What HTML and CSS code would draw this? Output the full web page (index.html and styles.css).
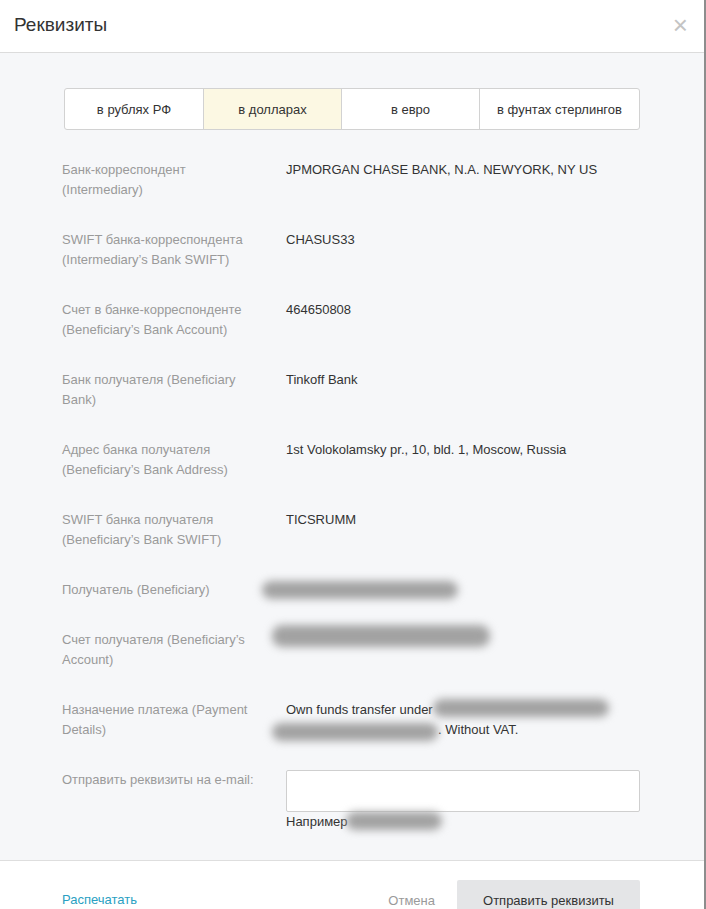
FILE: index.html
```html
<!DOCTYPE html>
<html lang="ru">
<head>
    <meta charset="UTF-8">
    <meta name="viewport" content="width=device-width, initial-scale=1.0">
    <title>Реквизиты</title>
    <link rel="stylesheet" href="styles.css">
</head>
<body>
    <div class="modal">
        <!-- Шапка -->
        <div class="modal-header">
            <h2>Реквизиты</h2>
            <span class="close">&times;</span>
        </div>

        <div class="modal-body">
            <div class="tabs">
                <div class="tab">в рублях РФ</div>
                <div class="tab active">в долларах</div>
                <div class="tab">в евро</div>
                <div class="tab">в фунтах стерлингов</div>
            </div>

            <div class="row">
                <div class="label">Банк-корреспондент (Intermediary)</div>
                <div class="value">JPMORGAN CHASE BANK, N.A. NEWYORK, NY US</div>
            </div>
            <div class="row">
                <div class="label">SWIFT банка-корреспондента (Intermediary’s Bank SWIFT)</div>
                <div class="value">CHASUS33</div>
            </div>
            <div class="row">
                <div class="label">Счет в банке-корреспонденте (Beneficiary’s Bank Account)</div>
                <div class="value">464650808</div>
            </div>
            <div class="row">
                <div class="label">Банк получателя (Beneficiary Bank)</div>
                <div class="value">Tinkoff Bank</div>
            </div>
            <div class="row">
                <div class="label">Адрес банка получателя (Beneficiary’s Bank Address)</div>
                <div class="value">1st Volokolamsky pr., 10, bld. 1, Moscow, Russia</div>
            </div>
            <div class="row">
                <div class="label">SWIFT банка получателя (Beneficiary’s Bank SWIFT)</div>
                <div class="value">TICSRUMM</div>
            </div>
            <div class="row">
                <div class="label">Получатель (Beneficiary)</div>
                <div class="value"><span class="blur blur-name"></span></div>
            </div>
            <div class="row">
                <div class="label">Счет получателя (Beneficiary’s Account)</div>
                <div class="value"><span class="blur blur-account"></span></div>
            </div>
            <div class="row">
                <div class="label">Назначение платежа (Payment Details)</div>
                <div class="value">
                    Own funds transfer under<span class="blur blur-purpose1"></span><br>
                    <span class="blur blur-purpose2"></span>. Without VAT.
                </div>
            </div>
            <div class="row row-email">
                <div class="label">Отправить реквизиты на e-mail:</div>
                <div class="value">
                    <input type="text" class="email-input">
                    <div class="hint">Например<span class="blur blur-hint"></span></div>
                </div>
            </div>
        </div>

        <div class="modal-footer">
            <a href="#" class="print">Распечатать</a>
            <div class="actions">
                <a href="#" class="cancel">Отмена</a>
                <button type="button">Отправить реквизиты</button>
            </div>
        </div>
    </div>
</body>
</html>
```

FILE: styles.css
```css
* {
    margin: 0;
    padding: 0;
    box-sizing: border-box;
    font-family: 'Liberation Sans', Arial, sans-serif;
}

body {
    background: #fff;
    overflow: hidden;
}

.modal {
    width: 706px;
    min-height: 909px;
    background: #fff;
    border-right: 2px solid #8d8d8d;
}

.modal-header {
    height: 53px;
    display: flex;
    justify-content: space-between;
    align-items: center;
    padding: 0 16px 2px 14px;
    border-bottom: 1px solid #dcdcdc;
}

h2 {
    font-size: 19px;
    font-weight: normal;
    color: #333;
}

.close {
    font-size: 26px;
    line-height: 1;
    color: #c4c4c4;
    font-weight: 300;
}

.modal-body {
    background: #f6f7f9;
    padding: 35px 64px 28px 62px;
    border-bottom: 1px solid #dedede;
}

.tabs {
    display: grid;
    grid-template-columns: 138px 138px 138px 1fr;
    margin: 0 0 30px 2px;
    height: 42px;
    background: #fff;
    border: 1px solid #d2d2d2;
    border-radius: 3px;
}

.tab {
    display: flex;
    justify-content: center;
    align-items: center;
    font-size: 13px;
    color: #333;
    white-space: nowrap;
    border-left: 1px solid #d2d2d2;
}

.tab:first-child {
    border-left: none;
}

.tab.active {
    background: #fcf8e3;
}

.row {
    display: flex;
    gap: 24px;
    margin-bottom: 30px;
    font-size: 13px;
    line-height: 20px;
}

.label {
    width: 200px;
    flex-shrink: 0;
    color: #9a9a9a;
}

.value {
    flex: 1;
    color: #333;
}

.row-email {
    margin-bottom: 0;
}

.email-input {
    display: block;
    width: 100%;
    height: 42px;
    border: 1px solid #cfcfcf;
    border-radius: 2px;
    background: #fff;
    outline: none;
}

/* замазанные данные */
.blur {
    display: inline-block;
    height: 18px;
    vertical-align: top;
    background: #a2a2a2;
    border-radius: 10px;
    filter: blur(4px);
}

.blur-name {
    width: 196px;
    margin-left: -24px;
    transform: translateY(1px);
}

.blur-account {
    width: 218px;
    height: 22px;
    margin-left: -14px;
    transform: translateY(-5px);
}

.blur-purpose1 {
    width: 176px;
    transform: translateY(-1px);
}

.blur-purpose2 {
    width: 166px;
    margin-left: -14px;
    transform: translateY(3px);
}

.blur-hint {
    width: 96px;
    margin-left: -2px;
}

.modal-footer {
    display: flex;
    justify-content: space-between;
    align-items: flex-start;
    padding: 19px 64px 0 62px;
}

.print {
    margin-top: 12px;
    font-size: 13px;
    color: #2a9fc2;
    text-decoration: none;
}

.actions {
    display: flex;
    align-items: center;
    gap: 22px;
}

.cancel {
    font-size: 13px;
    color: #9a9a9a;
    text-decoration: none;
}

button {
    width: 183px;
    height: 40px;
    border: none;
    border-radius: 2px;
    background: #e4e5e7;
    color: #333;
    font-size: 13px;
}
```
